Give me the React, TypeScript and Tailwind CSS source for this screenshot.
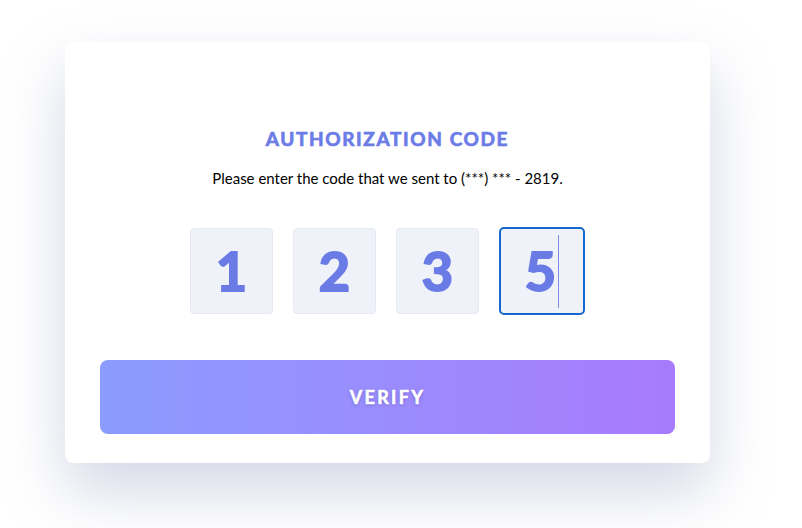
export default function App() {
  const digits = ["1", "2", "3"];
  return (
    <div
      className="min-h-[528px] w-[802px] bg-white pl-[65px] pt-[42px]"
      style={{ fontFamily: "Lato, 'Open Sans', sans-serif" }}
    >
      <div className="flex h-[421px] w-[645px] flex-col items-center rounded-[8px] bg-white px-[35px] pt-[85px] shadow-[0_28px_60px_rgba(160,168,200,0.45)]">
        <h1 className="text-[19px] font-bold leading-[24px] tracking-[0.085em] text-[#6c7ce7] [-webkit-text-stroke:0.7px_#6c7ce7]">
          AUTHORIZATION CODE
        </h1>
        <p className="mt-[15px] text-[15px] leading-[24px] text-black">
          Please enter the code that we sent to (***) *** - 2819.
        </p>
        <div className="mt-[37px] flex items-center gap-[20px]">
          {digits.map((d) => (
            <div
              key={d}
              className="flex h-[86px] w-[83px] items-center justify-center rounded-[4px] border border-[#e6e9f3] bg-[#f0f2fa] text-[54px] font-bold leading-none text-[#6a7be6] [-webkit-text-stroke:2px_#6a7be6]"
            >
              {d}
            </div>
          ))}
          <div className="flex h-[88px] w-[86px] items-center justify-center rounded-[5px] border-2 border-[#1767d0] bg-[#f0f2fa] text-[54px] font-bold leading-none text-[#6a7be6] [-webkit-text-stroke:2px_#6a7be6]">
            <span>5</span>
            <span className="ml-[2px] h-[73px] w-px bg-[#7d8be8]" />
          </div>
        </div>
        <button
          type="button"
          className="mt-[45px] flex h-[74px] w-full items-center justify-center rounded-[8px] bg-gradient-to-r from-[#8b9bfe] via-[#9a8cfd] to-[#a87afd] text-[18px] font-bold tracking-[0.13em] text-white [-webkit-text-stroke:0.6px_white] [text-shadow:0_1px_3px_rgba(60,40,140,0.45)]"
        >
          VERIFY
        </button>
      </div>
    </div>
  );
}
